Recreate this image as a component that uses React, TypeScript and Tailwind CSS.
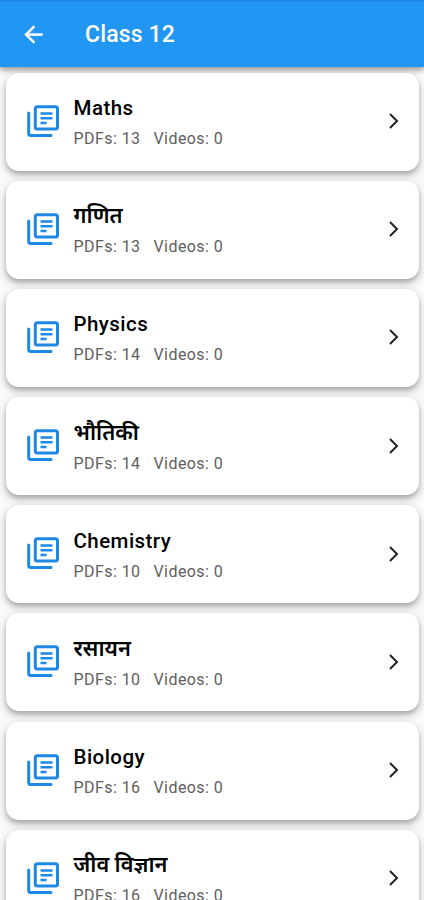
import React from 'react';

const subjects = [
  { name: 'Maths', pdfs: 13 },
  { name: 'गणित', pdfs: 13, hindi: true },
  { name: 'Physics', pdfs: 14 },
  { name: 'भौतिकी', pdfs: 14, hindi: true },
  { name: 'Chemistry', pdfs: 10 },
  { name: 'रसायन', pdfs: 10, hindi: true },
  { name: 'Biology', pdfs: 16 },
  { name: 'जीव विज्ञान', pdfs: 16, hindi: true },
];

function LibraryIcon() {
  return (
    <svg className="mb-[2px] h-[32px] w-[32px] shrink-0" viewBox="0 0 32 32" fill="none" stroke="#1e88e5" strokeWidth="3" strokeLinecap="round" strokeLinejoin="round">
      <rect x="8.300" y="1.800" width="22.200" height="22.200" rx="2" />
      <path d="M1.700 8v20.400a2 2 0 0 0 2 2H24" />
      <path d="M13.500 8.500h12M13.500 13.300h12M13.500 18.100h6" strokeLinecap="butt" strokeWidth="2.500" />
    </svg>
  );
}

function Card({ name, pdfs, hindi }: { name: string; pdfs: number; hindi?: boolean }) {
  return (
    <div className="flex h-[98px] shrink-0 items-center rounded-[13px] bg-white pl-[21px] pr-[13px] shadow-[0_3px_4px_rgba(0,0,0,0.18),0_4px_8px_1px_rgba(0,0,0,0.18)]">
      <LibraryIcon />
      <div className="ml-[14.500px] flex-1 pt-[3px]">
        <div className={`h-[31px] whitespace-nowrap text-black ${hindi ? 'text-[21.800px] font-semibold leading-[31px]' : 'text-[20.500px] font-medium leading-[32px] tracking-[0.450px]'}`}>{name}</div>
        <div className="flex h-[31px] gap-[13px] whitespace-nowrap text-[16px] leading-[31px] tracking-[0.430px] text-[#606060]">
          <span>PDFs: {pdfs}</span>
          <span>Videos: 0</span>
        </div>
      </div>
      <svg className="mb-px h-[24px] w-[24px]" viewBox="0 0 24 24" fill="none" stroke="#222" strokeWidth="2">
        <path d="M8 5l7 7-7 7" />
      </svg>
    </div>
  );
}

export default function App() {
  return (
    <div className="h-[900px] w-[424px] overflow-hidden bg-[#fafafa] font-[Roboto,'Noto_Sans','Noto_Sans_Devanagari',sans-serif]">
      <header className="flex h-[67px] items-center border-t-2 border-[#1e88e5] bg-[#2196f3] pl-[20px] text-white shadow-[0_3px_6px_rgba(0,0,0,0.4)]">
        <svg className="h-[27px] w-[27px]" viewBox="0 0 24 24" fill="currentColor" stroke="currentColor" strokeWidth="0.300">
          <path d="M20 11H7.830l5.590-5.590L12 4l-8 8 8 8 1.410-1.410L7.830 13H20v-2z" />
        </svg>
        <h1 className="ml-[38px] pt-px text-[23px] font-medium leading-[34px] tracking-[0.150px]">Class 12</h1>
      </header>
      <main className="flex flex-col gap-[10.200px] pl-[6px] pr-[5px] pt-[5.500px]">
        {subjects.map((s) => <Card key={s.name} {...s} />)}
      </main>
    </div>
  );
}
